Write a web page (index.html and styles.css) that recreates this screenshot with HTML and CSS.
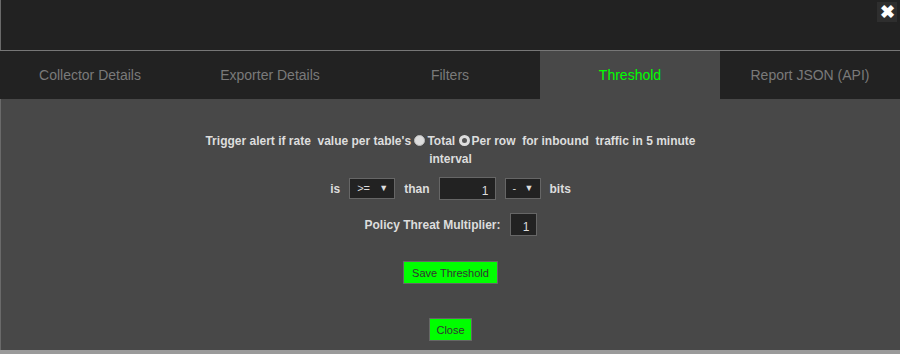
FILE: index.html
```html
<!DOCTYPE html>
<html lang="en">
<head>
  <meta charset="UTF-8" />
  <title>Report Settings - Threshold</title>
  <link rel="stylesheet" href="styles.css">
</head>
<body>

  <div class="modal">
    <div class="modal-head">
      <button class="close-x" title="Close">&#10006;</button>
    </div>

    <nav class="tabs">
      <a href="#">Collector Details</a>
      <a href="#">Exporter Details</a>
      <a href="#">Filters</a>
      <a href="#" class="active">Threshold</a>
      <a href="#">Report JSON (API)</a>
    </nav>

    <main class="modal-body">
      <p class="sentence">
        Trigger alert if rate&nbsp; value per table's
        <input type="radio" class="radio" name="scope" id="scopeTotal"><label for="scopeTotal">Total</label>
        <input type="radio" class="radio" name="scope" id="scopeRow" checked><label for="scopeRow">Per row</label>
        &nbsp;for inbound&nbsp; traffic in 5 minute
        <span class="unit">interval</span>
      </p>

      <div class="row">
        <span>is</span>
        <span class="select wide">&gt;=</span>
        <span>than</span>
        <input type="text" class="num" value="1">
        <span class="select">-</span>
        <span>bits</span>
      </div>

      <div class="row">
        <span>Policy Threat Multiplier:</span>
        <input type="text" class="num small" value="1">
      </div>

      <button class="btn save">Save Threshold</button>
      <button class="btn close">Close</button>
    </main>
  </div>

</body>
</html>
```

FILE: styles.css
```css
body {
  margin: 0;
  background-color: #9a9a9a;
  font-family: 'Liberation Sans', Arial, sans-serif;
  height: 354px;
  overflow: hidden;
}

.modal {
  width: 900px;
  border-left: 1px solid #6a6a6a;
  box-sizing: border-box;
}

.modal-head {
  height: 50px;
  background-color: #222;
  display: flex;
  justify-content: flex-end;
  align-items: flex-start;
  padding: 2px 3px 0 0;
  box-sizing: border-box;
}

.close-x {
  width: 20px;
  height: 20px;
  padding: 0;
  border: none;
  background-color: #2e2e2e;
  color: #fff;
  font-size: 18px;
  font-weight: bold;
  line-height: 20px;
  cursor: pointer;
}

.tabs {
  display: grid;
  grid-template-columns: repeat(5, 1fr);
  height: 49px;
  background-color: #222;
  border-top: 1px solid #777;
  box-sizing: border-box;
  margin-left: -1px;
}

.tabs a {
  display: flex;
  align-items: center;
  justify-content: center;
  color: #7a7a7a;
  text-decoration: none;
  font-size: 14px;
}

.tabs a.active {
  background-color: #484848;
  color: #00ff00;
}

.modal-body {
  height: 251px;
  background-color: #484848;
  color: #ddd;
  font-size: 12px;
  font-weight: bold;
  text-align: center;
  padding-top: 33px;
  box-sizing: border-box;
  display: flex;
  flex-direction: column;
  align-items: center;
}

.sentence {
  margin: 0;
  width: 530px;
  line-height: 18px;
}

.radio {
  appearance: none;
  -webkit-appearance: none;
  width: 11px;
  height: 11px;
  margin: 0 2px 0 0;
  vertical-align: -1px;
  border-radius: 50%;
  background-color: #ddd;
  border: 1px solid #bbb;
  box-sizing: border-box;
}

.radio:checked {
  border: 3px solid #ddd;
  background-color: #555;
}

.row {
  display: flex;
  align-items: center;
  gap: 9px;
  margin-top: 9px;
}

.row + .row {
  margin-top: 13px;
}

.select {
  position: relative;
  width: 36px;
  height: 21px;
  background-color: #222;
  border: 1px solid #666;
  box-sizing: border-box;
  color: #ddd;
  font-weight: normal;
  font-size: 11px;
  line-height: 19px;
  text-align: left;
  padding-left: 7px;
}

.select.wide {
  width: 46px;
}

.select::after {
  content: "\25BC";
  position: absolute;
  right: 6px;
  top: 0;
  font-size: 9px;
}

.num {
  width: 57px;
  height: 23px;
  background-color: #222;
  border: 1px solid #666;
  box-sizing: border-box;
  color: #ddd;
  font-family: inherit;
  font-size: 12px;
  text-align: right;
  padding: 4px 6px 0 0;
}

.num.small {
  width: 27px;
}

.btn {
  background-color: #00ff00;
  border: 1px solid #666;
  color: #333;
  font-family: inherit;
  font-size: 11px;
  height: 23px;
  padding: 0 8px;
  cursor: pointer;
}

.save {
  margin-top: 25px;
}

.close {
  margin-top: 34px;
  padding: 0 6px;
}
```
